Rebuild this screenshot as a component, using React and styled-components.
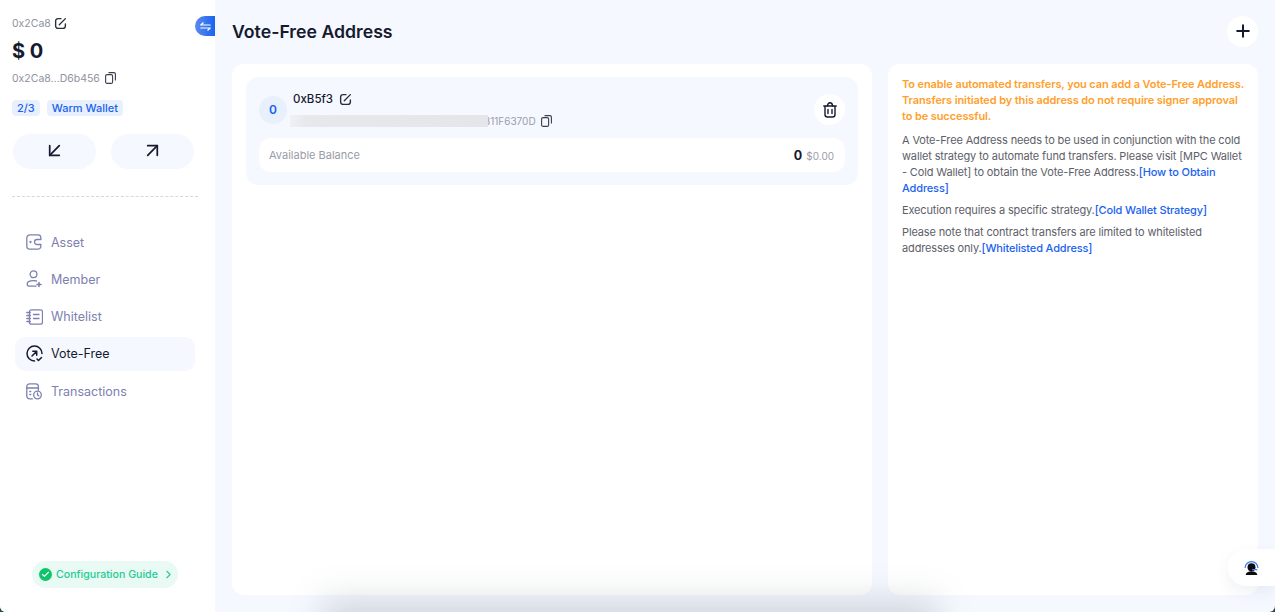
import React from 'react';
import styled, { createGlobalStyle } from 'styled-components';
import { ArrowDownLeft, ArrowUpRight, Plus, ChevronRight, Check } from 'lucide-react';

const GlobalStyle = createGlobalStyle`
  html, body { margin: 0; height: 100%; background: #2b4a4c; }
  * { box-sizing: border-box; }
  body { font-family: Inter, "Open Sans", sans-serif; color: #161a2e; }
`;

/* --- layout base --- */
const Page = styled.div`
  width: 1275px;
  height: 612px;
  display: flex;
  overflow: hidden;
  position: relative;
  background: #f5f8ff;
  border-radius: 0 0 6px 6px;
`;

const Sidebar = styled.aside`
  position: relative;
  width: 215px;
  flex: none;
  background: #fff;
  padding: 15px 12px 24px;
  display: flex;
  flex-direction: column;
`;

const Main = styled.main`
  flex: 1;
  padding: 15px 17px 17px;
  display: flex;
  flex-direction: column;
  min-width: 0;
`;

/* --- sidebar head --- */
const NameRow = styled.div`
  display: flex;
  align-items: center;
  gap: 3px;
  height: 16px;
  font-size: 10.5px;
  color: #8f92a1;
`;

const Amount = styled.div`
  font-size: 20px;
  line-height: 24px;
  font-weight: 700;
  margin-top: 8px;
`;

const AddressRow = styled.div`
  display: flex;
  align-items: center;
  gap: 5px;
  margin-top: 7px;
  height: 16px;
  font-size: 10.5px;
  color: #8f92a1;
`;

const Tags = styled.div`
  display: flex;
  gap: 7px;
  margin-top: 14px;
`;

const Tag = styled.span`
  height: 16px;
  padding: 0 5px;
  border-radius: 4px;
  background: #e8effd;
  color: #1a62f0;
  font-size: 11px;
  line-height: 16px;
  font-weight: 500;
`;

const ActionRow = styled.div`
  display: flex;
  gap: 15px;
  margin: 18px 0 0 1px;
`;

const ActionBtn = styled.button`
  width: 83px;
  height: 35px;
  border: 0;
  padding: 0 0 2px;
  border-radius: 18px;
  background: #f5f8ff;
  color: #161a2e;
  display: flex;
  align-items: center;
  justify-content: center;
`;

const Divider = styled.div`
  width: 186px;
  margin-top: 27px;
  border-top: 1px dashed #d5d7dd;
`;

const SwitchTab = styled.div`
  position: absolute;
  top: 16px;
  right: 0;
  width: 20px;
  height: 20px;
  border-radius: 10px 0 0 10px;
  background: linear-gradient(90deg, #5b8cf0, #1a62f0);
  display: flex;
  align-items: center;
  justify-content: center;
`;

/* --- nav --- */
const Nav = styled.nav`
  display: flex;
  flex-direction: column;
  gap: 3.25px;
  margin: 28px 0 0 3px;
`;

const NavItem = styled.div`
  width: 180px;
  height: 34px;
  padding-left: 10px;
  display: flex;
  align-items: center;
  gap: 8px;
  border-radius: 10px;
  font-size: 12.5px;
  background: ${({ $active }) => ($active ? '#f5f8ff' : 'transparent')};
  color: ${({ $active }) => ($active ? '#161a2e' : '#7d80b0')};
`;

const NavIcon = styled.span`
  width: 18px;
  flex: none;
  display: flex;
  justify-content: center;
`;

const Guide = styled.div`
  margin: auto 0 0 20px;
  width: 146px;
  height: 27px;
  border-radius: 14px;
  background: #e9f9f3;
  color: #25cb93;
  font-size: 10.6px;
  font-weight: 500;
  display: flex;
  align-items: center;
  padding-left: 7px;
  gap: 4px;
  white-space: nowrap;
`;

const GuideCheck = styled.span`
  width: 13px;
  height: 13px;
  flex: none;
  border-radius: 50%;
  background: #10c46b;
  color: #fff;
  display: flex;
  align-items: center;
  justify-content: center;
`;

/* --- header --- */
const Header = styled.header`
  height: 32px;
  display: flex;
  align-items: center;
  justify-content: space-between;
  margin-bottom: 17px;
`;

const Title = styled.h1`
  margin: 0;
  font-size: 17.7px;
  font-weight: 600;
`;

const RoundBtn = styled.button`
  width: 31px;
  height: 31px;
  flex: none;
  border: 0;
  padding: 0;
  border-radius: 50%;
  background: #fff;
  color: #161a2e;
  display: flex;
  align-items: center;
  justify-content: center;
`;

/* --- panels --- */
const Panels = styled.div`
  flex: 1;
  display: flex;
  gap: 16px;
  min-height: 0;
`;

const ListPanel = styled.section`
  width: 640px;
  flex: none;
  background: #fff;
  border-radius: 12px;
  padding: 13px 14px;
`;

const InfoPanel = styled.section`
  flex: 1;
  min-width: 0;
  background: #fff;
  border-radius: 12px;
  padding: 13px 14px;
  font-size: 11px;
  line-height: 15.8px;
  letter-spacing: -.14px;
  color: #5d6069;
  white-space: nowrap;
`;

const AddressCard = styled.div`
  height: 108px;
  background: #f5f8ff;
  border-radius: 12px;
  padding: 14px 13px 13px;
  display: flex;
  flex-direction: column;
  justify-content: space-between;
`;

const CardTop = styled.div`
  display: flex;
  align-items: center;
`;

const Avatar = styled.div`
  width: 28px;
  height: 28px;
  flex: none;
  border-radius: 50%;
  background: #e8effd;
  color: #1a62f0;
  font-size: 12px;
  font-weight: 600;
  display: flex;
  align-items: center;
  justify-content: center;
`;

const CardInfo = styled.div`
  flex: 1;
  margin-left: 3px;
`;

const CardName = styled.div`
  display: flex;
  align-items: center;
  gap: 6px;
  padding-left: 3px;
  font-size: 11.5px;
  font-weight: 500;
  line-height: 16px;
`;

const CardAddress = styled.div`
  display: flex;
  align-items: center;
  margin-top: 7px;
  font-size: 10px;
  line-height: 14px;
  color: #9a9ca8;
`;

const BlurMask = styled.span`
  position: relative;
  z-index: 1;
  width: 198px;
  height: 12px;
  margin-right: -4px;
  background: linear-gradient(90deg, #f0f1f4 0, #e6e8ec 8%, #e4e6ea 100%);
`;

const CopyGap = styled.span`
  display: flex;
  margin-left: 5px;
`;

const BalanceRow = styled.div`
  height: 34px;
  background: #fff;
  border-radius: 12px;
  padding: 0 11px 0 10px;
  display: flex;
  align-items: center;
  justify-content: space-between;
  font-size: 11px;
  color: #9a9ca8;
`;

const BalanceValue = styled.span`
  display: flex;
  align-items: baseline;
  gap: 4px;
  font-size: 10px;
`;

const BalanceNum = styled.b`
  font-size: 12.5px;
  font-weight: 700;
  color: #161a2e;
`;

const Warning = styled.p`
  margin: 0 0 9px;
  color: #ff9f2e;
  font-weight: 600;
  letter-spacing: -.1px;
`;

const Para = styled.p`
  margin: 0 0 6.5px;
`;

const DocLink = styled.a`
  color: #1a62f0;
  font-weight: 500;
`;

/* --- floating --- */
const SupportTab = styled.div`
  position: absolute;
  right: 0;
  top: 549px;
  width: 47px;
  height: 37px;
  border-radius: 18px 0 0 18px;
  background: #fff;
  box-shadow: 0 6px 16px rgba(30, 50, 100, .07);
  display: flex;
  align-items: center;
  justify-content: center;
`;

const BottomGlow = styled.div`
  position: absolute;
  left: 335px;
  bottom: -30px;
  width: 590px;
  height: 30px;
  box-shadow: 0 0 34px 12px rgba(110, 120, 126, .26);
  pointer-events: none;
`;

/* --- drawn icons --- */
const EditIcon = ({ size = 13 }) => (
  <svg width={size} height={size} viewBox="0 0 16 16" fill="none" stroke="#2a2d3a" strokeWidth="1.7" strokeLinecap="round">
    <path d="M14 8.500V11a3 3 0 0 1-3 3H5a3 3 0 0 1-3-3V5a3 3 0 0 1 3-3h3.500" />
    <path d="M6.500 9.500 14 2" />
  </svg>
);

const CopyIcon = () => (
  <svg width="11" height="12" viewBox="0 0 11 12" fill="none" stroke="#3c3f4c" strokeWidth="1.1">
    <rect x=".6" y="2.600" width="7" height="8.800" rx="1.500" />
    <path d="M3.500.6h5.400a1.500 1.500 0 0 1 1.500 1.500v6.300" />
  </svg>
);

const SwitchIcon = () => (
  <svg width="11" height="9" viewBox="0 0 11 9" fill="none" stroke="#fff" strokeWidth="1.200" strokeLinecap="round" strokeLinejoin="round">
    <path d="M3.200.8.800 3h9.400M7.800 8.200 10.200 6H.8" />
  </svg>
);

const WalletIcon = () => (
  <svg width="16" height="16" viewBox="0 0 16 16" fill="none" stroke="currentColor" strokeWidth="1.300" strokeLinecap="round">
    <path d="M14.800 4.500V3.600A2.800 2.800 0 0 0 12 .8H4A3.200 3.200 0 0 0 .8 4v8A3.200 3.200 0 0 0 4 15.200h8a2.800 2.800 0 0 0 2.800-2.800v-.9" />
    <path d="M15 5.500h-4a2.500 2.500 0 0 0 0 5h4" />
    <circle cx="4.500" cy="8" r=".5" fill="currentColor" />
  </svg>
);

const MemberIcon = () => (
  <svg width="16" height="18" viewBox="0 0 16 18" fill="none" stroke="currentColor" strokeWidth="1.300" strokeLinecap="round">
    <circle cx="7.500" cy="4.300" r="3.400" />
    <path d="M10 16.200H3.500A2.300 2.300 0 0 1 1.200 14c0-2 2-3.300 6.300-3.300 1.200 0 2.200.1 3 .3" />
    <path d="M13 12.500v4M11 14.500h4" strokeWidth="1.600" />
  </svg>
);

const ListIcon = () => (
  <svg width="17" height="16" viewBox="0 0 17 16" fill="none" stroke="currentColor" strokeWidth="1.300" strokeLinecap="round">
    <rect x="3.500" y=".8" width="13" height="14.400" rx="2" />
    <path d="M7.500 5.500h5.500M7.500 9.500h5.500M.8 3.500h3.500M.8 6.500h3.500M.8 9.500h3.500M.8 12.500h3.500" />
  </svg>
);

const VoteIcon = () => (
  <svg width="17" height="17" viewBox="0 0 17 17" fill="none" stroke="#161a2e" strokeWidth="1.500" strokeLinecap="round" strokeLinejoin="round">
    <path d="M16 8.500A7.500 7.500 0 1 0 8.500 16" />
    <path d="M6 11l4.500-4.500M6.800 6.300h3.900v3.900" />
    <path d="M11 14l1.500 1.500 3-3" />
  </svg>
);

const TxIcon = () => (
  <svg width="16" height="17" viewBox="0 0 16 17" fill="none" stroke="currentColor" strokeWidth="1.300" strokeLinecap="round">
    <path d="M6.500 15.800H3.600A2.800 2.800 0 0 1 .8 13V3.600A2.800 2.800 0 0 1 3.600.8h6A2.800 2.800 0 0 1 12.400 3.600V7" />
    <path d="M.8 5h11.600M3.800 8.500h1M3.800 11.500h1" />
    <circle cx="11.500" cy="12" r="3.800" />
    <path d="M11.500 10v2l1.300.9" />
  </svg>
);

const TrashIcon = () => (
  <svg width="14" height="16" viewBox="0 0 14 16" fill="none" stroke="#161a2e" strokeWidth="1.400" strokeLinecap="round">
    <path d="M.8 4h12.400M2 4v8.500a2.500 2.500 0 0 0 2.500 2.500h5a2.500 2.500 0 0 0 2.500-2.500V4" />
    <path d="M4.500 4c0-2 1-3.200 2.500-3.200S9.500 2 9.500 4M5 7.500v4M9 7.500v4" />
  </svg>
);

const SupportIcon = () => (
  <svg width="15" height="15" viewBox="0 0 14 14" fill="none">
    <path d="M1 7.500A6 6 0 0 1 13 7.500" stroke="#3f7cf2" strokeWidth="1.200" />
    <circle cx="7" cy="6.800" r="3.700" fill="#0a0c14" />
    <path d="M1.500 14c.4-2.400 2.500-3.500 5.500-3.500s5.100 1.100 5.500 3.500z" fill="#0a0c14" />
    <path d="M8 9h4" stroke="#3f7cf2" strokeWidth="1.200" strokeLinecap="round" />
  </svg>
);

const navItems = [
  { label: 'Asset', icon: <WalletIcon /> },
  { label: 'Member', icon: <MemberIcon /> },
  { label: 'Whitelist', icon: <ListIcon /> },
  { label: 'Vote-Free', icon: <VoteIcon />, active: true },
  { label: 'Transactions', icon: <TxIcon /> },
];

export default function App() {
  return (
    <Page>
      <GlobalStyle />
      <Sidebar>
        <SwitchTab><SwitchIcon /></SwitchTab>
        <NameRow>0x2Ca8 <EditIcon /></NameRow>
        <Amount>$ 0</Amount>
        <AddressRow>0x2Ca8...D6b456 <CopyIcon /></AddressRow>
        <Tags>
          <Tag>2/3</Tag>
          <Tag>Warm Wallet</Tag>
        </Tags>
        <ActionRow>
          <ActionBtn><ArrowDownLeft size={23} strokeWidth={1.8} /></ActionBtn>
          <ActionBtn><ArrowUpRight size={23} strokeWidth={1.8} /></ActionBtn>
        </ActionRow>
        <Divider />
        <Nav>
          {navItems.map((item) => (
            <NavItem key={item.label} $active={item.active}>
              <NavIcon>{item.icon}</NavIcon>
              {item.label}
            </NavItem>
          ))}
        </Nav>
        <Guide>
          <GuideCheck><Check size={9} strokeWidth={3} /></GuideCheck>
          Configuration Guide
          <ChevronRight size={13} strokeWidth={2} />
        </Guide>
      </Sidebar>

      <Main>
        <Header>
          <Title>Vote-Free Address</Title>
          <RoundBtn><Plus size={20} strokeWidth={2.4} /></RoundBtn>
        </Header>
        <Panels>
          <ListPanel>
            <AddressCard>
              <CardTop>
                <Avatar>0</Avatar>
                <CardInfo>
                  <CardName>0xB5f3 <EditIcon /></CardName>
                  <CardAddress>
                    <BlurMask />
                    311F6370D
                    <CopyGap><CopyIcon /></CopyGap>
                  </CardAddress>
                </CardInfo>
                <RoundBtn><TrashIcon /></RoundBtn>
              </CardTop>
              <BalanceRow>
                Available Balance
                <BalanceValue><BalanceNum>0</BalanceNum> $0.00</BalanceValue>
              </BalanceRow>
            </AddressCard>
          </ListPanel>
          <InfoPanel>
            <Warning>
              To enable automated transfers, you can add a Vote-Free Address.<br />
              Transfers initiated by this address do not require signer approval<br />
              to be successful.
            </Warning>
            <Para>
              A Vote-Free Address needs to be used in conjunction with the cold<br />
              wallet strategy to automate fund transfers. Please visit [MPC Wallet<br />
              - Cold Wallet] to obtain the Vote-Free Address.<DocLink>[How to Obtain<br />Address]</DocLink>
            </Para>
            <Para>
              Execution requires a specific strategy.<DocLink>[Cold Wallet Strategy]</DocLink>
            </Para>
            <Para>
              Please note that contract transfers are limited to whitelisted<br />
              addresses only.<DocLink>[Whitelisted Address]</DocLink>
            </Para>
          </InfoPanel>
        </Panels>
      </Main>

      <SupportTab><SupportIcon /></SupportTab>
      <BottomGlow />
    </Page>
  );
}
